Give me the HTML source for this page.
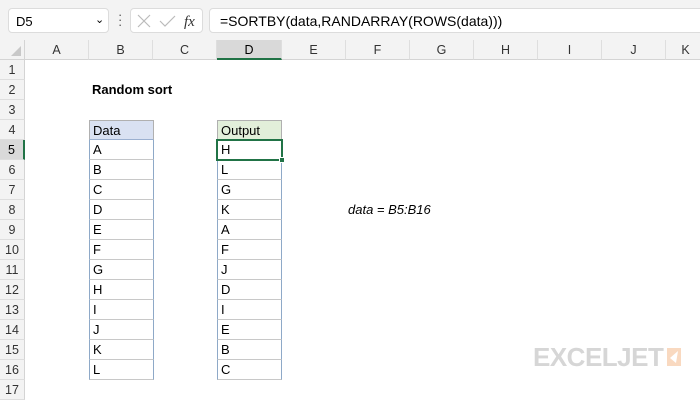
<!DOCTYPE html>
<html><head><style>
*{margin:0;padding:0;box-sizing:border-box}
body{width:700px;height:400px;overflow:hidden;background:#fff;font-family:"Liberation Sans",Calibri,sans-serif;font-size:13px;color:#000;position:relative}
.a{position:absolute}
.top{left:0;top:0;width:700px;height:40px;background:#f3f3f3}
.box{background:#fff;border:1px solid #dcdcdc;border-radius:4px}
.colh{top:40px;height:20px;background:#f3f3f3;border-bottom:1px solid #d4d4d4;color:#333;text-align:center;line-height:20px;font-size:12.5px;border-right:1px solid #dedede}
.rowh{left:0;width:25px;height:20px;background:#f3f3f3;border-right:1px solid #d4d4d4;border-bottom:1px solid #dedede;color:#333;text-align:center;line-height:20px;font-size:12.5px}
.c{height:20px;line-height:20px;padding-left:3px;border-left:1px solid #8ea9c8;border-right:1px solid #8ea9c8;border-bottom:1px solid #c8c8c8}
</style></head><body>
<div class="a top"></div>
<div class="a box" style="left:8px;top:8px;width:101px;height:25px;padding:5px 0 0 7px;font-size:13px">D5<span class="a" style="left:86px;top:4px;font-size:11px">&#8964;</span></div>
<div class="a" style="left:118px;top:12px;width:2px;height:16px;color:#555;font-size:13px;line-height:5px">·<br>·<br>·</div>
<div class="a box" style="left:130px;top:8px;width:73px;height:25px"></div>
<svg class="a" style="left:136px;top:13px" width="64" height="16"><path d="M2 2L14 14M14 2L2 14" stroke="#bbb" stroke-width="1.2" fill="none"/><path d="M24 8L29 13L39 3" stroke="#bbb" stroke-width="1.2" fill="none"/><text x="48" y="13" font-family="Liberation Serif" font-style="italic" font-size="15" fill="#333">fx</text></svg>
<div class="a box" style="left:209px;top:8px;width:495px;height:25px;padding:4px 0 0 10px;font-size:14px">=SORTBY(data,RANDARRAY(ROWS(data)))</div>

<div class="a" style="left:0;top:40px;width:25px;height:20px;background:#f3f3f3;border-right:1px solid #d4d4d4;border-bottom:1px solid #d4d4d4"></div>
<svg class="a" style="left:8px;top:45px" width="14" height="12"><path d="M13 1L13 11L3 11Z" fill="#c8c8c8"/></svg>
<div class="a colh" style="left:25px;width:64px">A</div>
<div class="a colh" style="left:89px;width:64px">B</div>
<div class="a colh" style="left:153px;width:64px">C</div>
<div class="a colh" style="left:217px;width:65px;background:#d9d9d9;border-bottom:2px solid #217346;color:#000">D</div>
<div class="a colh" style="left:282px;width:64px">E</div>
<div class="a colh" style="left:346px;width:64px">F</div>
<div class="a colh" style="left:410px;width:64px">G</div>
<div class="a colh" style="left:474px;width:64px">H</div>
<div class="a colh" style="left:538px;width:64px">I</div>
<div class="a colh" style="left:602px;width:64px">J</div>
<div class="a colh" style="left:666px;width:40px">K</div>

<div class="a rowh" style="top:60px">1</div>
<div class="a rowh" style="top:80px">2</div>
<div class="a rowh" style="top:100px">3</div>
<div class="a rowh" style="top:120px">4</div>
<div class="a rowh" style="top:140px;background:#d9d9d9;border-right:2px solid #217346;color:#000">5</div>
<div class="a rowh" style="top:160px">6</div>
<div class="a rowh" style="top:180px">7</div>
<div class="a rowh" style="top:200px">8</div>
<div class="a rowh" style="top:220px">9</div>
<div class="a rowh" style="top:240px">10</div>
<div class="a rowh" style="top:260px">11</div>
<div class="a rowh" style="top:280px">12</div>
<div class="a rowh" style="top:300px">13</div>
<div class="a rowh" style="top:320px">14</div>
<div class="a rowh" style="top:340px">15</div>
<div class="a rowh" style="top:360px">16</div>
<div class="a rowh" style="top:380px">17</div>

<div class="a" style="left:92px;top:82px;font-weight:bold;font-size:13px">Random sort</div>

<div class="a" style="left:89px;top:120px;width:65px">
<div class="c" style="background:#d9e1f2;border:1px solid #b0b0b0;border-bottom:1px solid #9bb0d0">Data</div>
<div class="c">A</div><div class="c">B</div><div class="c">C</div><div class="c">D</div><div class="c">E</div><div class="c">F</div><div class="c">G</div><div class="c">H</div><div class="c">I</div><div class="c">J</div><div class="c">K</div><div class="c">L</div>
</div>
<div class="a" style="left:217px;top:120px;width:65px">
<div class="c" style="background:#e2efda;border:1px solid #b0b0b0;border-bottom:1px solid #9bb0d0">Output</div>
<div class="c">H</div><div class="c">L</div><div class="c">G</div><div class="c">K</div><div class="c">A</div><div class="c">F</div><div class="c">J</div><div class="c">D</div><div class="c">I</div><div class="c">E</div><div class="c">B</div><div class="c">C</div>
</div>
<div class="a" style="left:216px;top:139px;width:67px;height:22px;border:2px solid #217346"></div>
<div class="a" style="left:279px;top:157px;width:6px;height:6px;background:#217346;border:1px solid #fff"></div>

<div class="a" style="left:348px;top:202px;font-style:italic">data = B5:B16</div>

<div class="a" style="left:533px;top:344px;font-weight:bold;font-size:26px;color:#d6d6d6;letter-spacing:-0.5px;line-height:26px">EXCELJET</div>
<div class="a" style="left:667px;top:348px;width:14px;height:18px;background:#f9d9c0"></div>
<svg class="a" style="left:667px;top:348px" width="14" height="18"><path d="M11 3L3 10L9 15Z" fill="#fff"/></svg>
</body></html>
